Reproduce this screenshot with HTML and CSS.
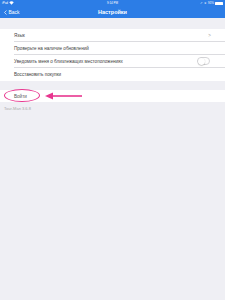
FILE: index.html
```html
<!DOCTYPE html>
<html>
<head>
<meta charset="utf-8">
<link rel="stylesheet" href="styles.css">
</head>
<body>
<div class="screen">
  <div class="header">
    <div class="status">
      <span class="st-left">iPad <svg class="wifi" viewBox="0 0 10 8" width="5" height="4"><path d="M5 7.5L0.5 2.5A6.5 6.5 0 0 1 9.5 2.5Z" fill="#fff"/></svg></span>
      <span class="st-mid">9:14 PM</span>
      <span class="st-right"><span class="arr">➚</span> ∗ 91% <span class="batt"></span></span>
    </div>
    <div class="nav">
      <span class="back"><svg viewBox="0 0 6 10" width="3" height="5"><path d="M5 1L1 5L5 9" fill="none" stroke="#fff" stroke-width="1.4"/></svg>Back</span>
      <span class="title">Настройки</span>
    </div>
  </div>
  <div class="gap top"></div>
  <div class="group">
    <div class="row"><span>Язык</span><span class="chev">&gt;</span></div>
    <div class="row"><span>Проверьте на наличие обновлений</span></div>
    <div class="row"><span>Уведомить меня о близлежащих местоположениях</span><span class="toggle"></span></div>
    <div class="row last"><span>Восстановить покупки</span></div>
  </div>
  <div class="gap"></div>
  <div class="group">
    <div class="row login last"><span>Войти</span></div>
  </div>
  <div class="version">Tour-Man 3.6.8</div>
  <div class="annot">
    <div class="ellipse"></div>
    <svg class="arrow" viewBox="0 0 40 10" width="40" height="10"><path d="M38 5H8" stroke="#e8368f" stroke-width="1.6"/><path d="M1 5L9 1.5L9 8.5Z" fill="#e8368f"/></svg>
  </div>
</div>
</body>
</html>
```
FILE: styles.css
```css
* { box-sizing: border-box; margin: 0; padding: 0; }
body { margin: 0; width: 225px; height: 300px; overflow: hidden; background: #efeff4; font-family: "Liberation Sans", Arial, sans-serif; }
.screen { position: relative; width: 225px; height: 300px; display: flex; flex-direction: column; background: #efeff4; }
.header { background: #2c7de6; height: 18px; color: #fff; display: flex; flex-direction: column; }
.status { height: 6px; display: flex; justify-content: space-between; align-items: center; padding: 0 2px; font-size: 3px; line-height: 6px; }
.st-left { display: flex; align-items: center; gap: 1px; width: 40px; }
.st-mid { flex: 1; text-align: center; }
.st-right { width: 40px; display: flex; justify-content: flex-end; align-items: center; gap: 1px; }
.arr { font-size: 3px; }
.batt { display: inline-block; width: 8px; height: 3px; background: #fff; border-radius: 0.5px; }
.nav { flex: 1; position: relative; display: flex; align-items: center; justify-content: center; }
.back { position: absolute; left: 4px; top: 3px; display: flex; align-items: center; gap: 1.5px; font-size: 5px; }
.title { font-size: 5.5px; font-weight: bold; }
.gap { height: 9px; }
.gap.top { height: 11px; }
.group { background: #fff; padding-left: 14px; }
.row { height: 13px; display: flex; align-items: center; justify-content: space-between; padding-right: 13px; font-size: 4.6px; color: #444; border-bottom: 0.5px solid #dcdce0; }
.row.last { border-bottom: none; }
.row.login { height: 12px; color: #555; }
.chev { color: #999; font-size: 4.5px; margin-right: 1px; }
.toggle { width: 13px; height: 8px; border: 0.6px solid #d5d5d8; border-radius: 4px; position: relative; background: #fff; margin-right: 2px; }
.toggle::before { content: ""; position: absolute; left: 0; top: 0; width: 7px; height: 7px; border-radius: 50%; background: #fff; box-shadow: 0 0.5px 1px rgba(0,0,0,0.35); }
.version { padding: 4px 0 0 4px; font-size: 4px; color: #aaa; }
.annot { position: absolute; left: 0; top: 0; width: 225px; height: 300px; pointer-events: none; }
.ellipse { position: absolute; left: 4px; top: 89px; width: 36px; height: 13px; border: 1.2px solid #e8368f; border-radius: 50%; }
.arrow { position: absolute; left: 44px; top: 91px; }
```
